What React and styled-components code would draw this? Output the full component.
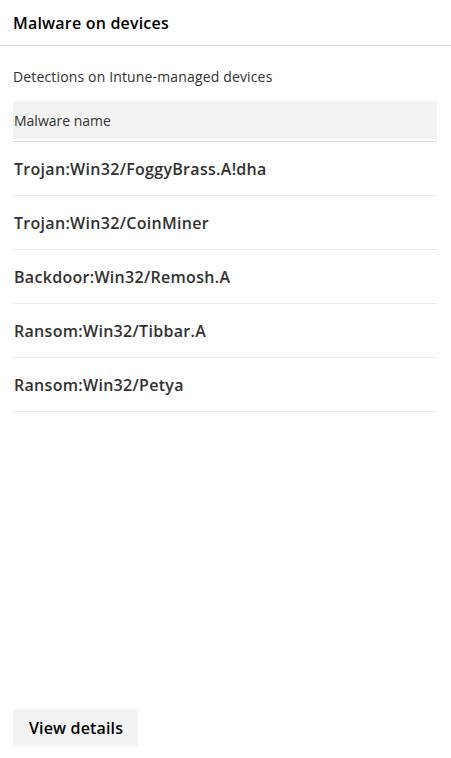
import React from 'react';
import styled, { createGlobalStyle } from 'styled-components';

const GlobalStyle = createGlobalStyle`
  html, body {
    margin: 0;
    padding: 0;
    background: #fff;
  }
  body {
    font-family: 'Open Sans', 'Noto Sans', sans-serif;
    color: #323130;
  }
  * {
    box-sizing: border-box;
  }
`;

const Panel = styled.div`
  display: flex;
  flex-direction: column;
  min-height: 100vh;
  width: 451px;
`;

const Header = styled.div`
  height: 46px;
  padding: 0 13px;
  display: flex;
  align-items: center;
  border-bottom: 1px solid #e1dfdd;

  h2 {
    margin: 0;
    font-size: 16px;
    font-weight: 600;
    color: #000;
    letter-spacing: 0.2px;
  }
`;

const Body = styled.div`
  flex: 1;
  display: flex;
  flex-direction: column;
  padding: 0 14px 12px 13px;
`;

const Subtitle = styled.p`
  margin: 0;
  height: 55px;
  display: flex;
  align-items: center;
  padding-top: 6px;
  font-size: 14px;
  letter-spacing: 0.15px;
`;

const Table = styled.div`
  display: flex;
  flex-direction: column;
`;

const HeadRow = styled.div`
  height: 40px;
  display: flex;
  align-items: center;
  padding: 0 1px;
  background: #f3f3f3;
  font-size: 14px;
  letter-spacing: 0;
  border-bottom: 2px solid #fff;
  box-shadow: 0 1px 0 #e1dfdd;
  margin-bottom: 1px;
`;

const Row = styled.div`
  height: 54px;
  display: flex;
  align-items: center;
  padding: 0 1px;
  border-bottom: 1px solid #edebe9;
  font-size: 16px;
  font-weight: 600;
  letter-spacing: 0.3px;
`;

const Button = styled.button`
  margin-top: auto;
  align-self: flex-start;
  height: 37px;
  padding: 0 15px 0 16px;
  border: none;
  background: #f3f3f3;
  font-family: inherit;
  font-size: 16px;
  font-weight: 600;
  color: #000;
  letter-spacing: 0.15px;
  cursor: pointer;
`;

const malware = [
  'Trojan:Win32/FoggyBrass.A!dha',
  'Trojan:Win32/CoinMiner',
  'Backdoor:Win32/Remosh.A',
  'Ransom:Win32/Tibbar.A',
  'Ransom:Win32/Petya',
];

export default function App() {
  return (
    <Panel>
      <GlobalStyle />
      <Header>
        <h2>Malware on devices</h2>
      </Header>
      <Body>
        <Subtitle>Detections on Intune-managed devices</Subtitle>
        <Table>
          <HeadRow>Malware name</HeadRow>
          {malware.map(name => (
            <Row key={name}>{name}</Row>
          ))}
        </Table>
        <Button>View details</Button>
      </Body>
    </Panel>
  );
}
